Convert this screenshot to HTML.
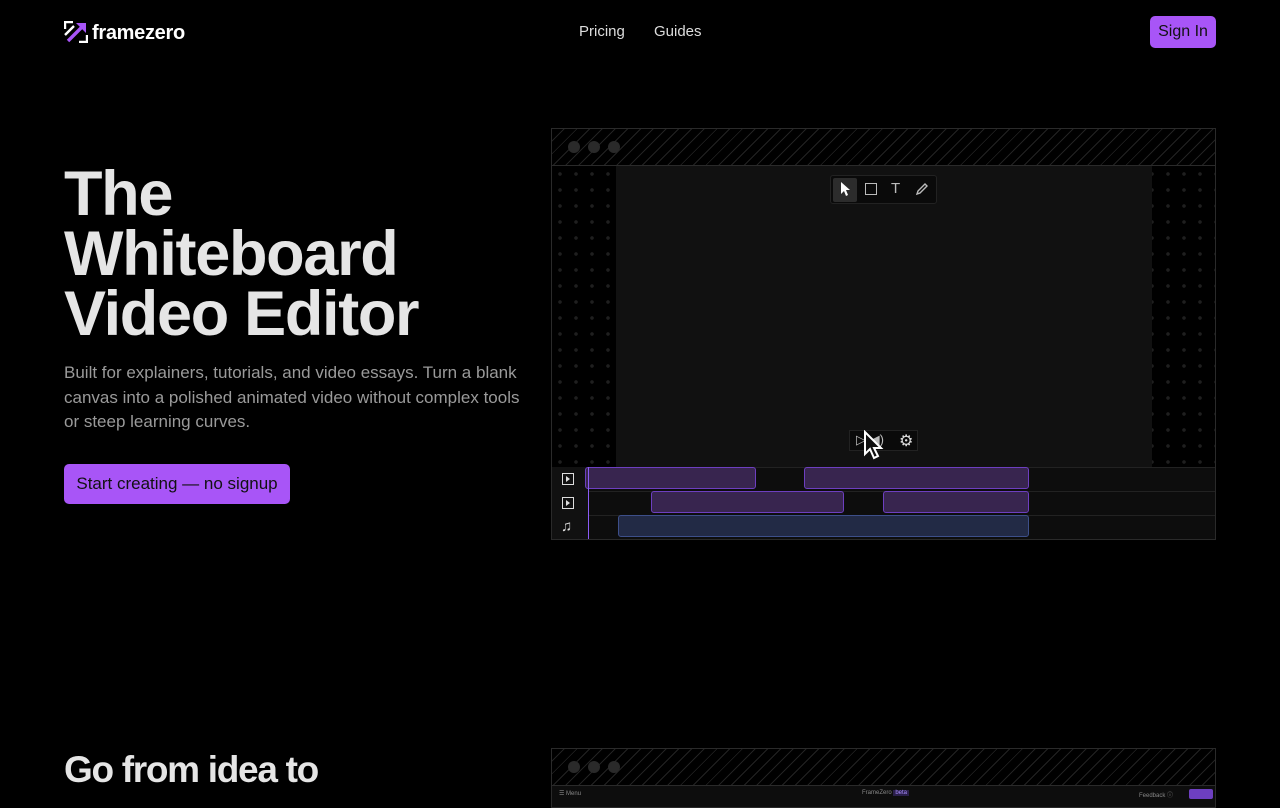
<!DOCTYPE html>
<html><head><meta charset="utf-8"><style>
*{margin:0;padding:0;box-sizing:border-box}
body{width:1280px;height:800px;overflow:hidden;background:#000;font-family:"Liberation Sans",sans-serif;color:#e5e5e5;position:relative}
.abs{position:absolute}
.hatch{background:repeating-linear-gradient(135deg,#000 0 8px,#222 8px 9px)}
.dots{background-color:#000;background-image:radial-gradient(circle,#1f1f1f 1.6px,transparent 2px)}
.clip{position:absolute;height:22px;border:1px solid #6d3fc0;background:#38254f;border-radius:3px}
</style></head><body>
<svg class="abs" style="left:64px;top:21px" width="24" height="22" viewBox="0 0 24 22"><path d="M1 8V1h8M1 14l9-9M15 21h8v-7" stroke="#fff" stroke-width="2.4" fill="none"/><path d="M4 20L18 6" stroke="#a855f7" stroke-width="3.4"/><path d="M12 2h10v10z" fill="#a855f7"/></svg>
<div class="abs" style="left:92px;top:22px;font-size:20px;font-weight:bold;color:#fff;letter-spacing:-0.3px">framezero</div>
<div class="abs" style="left:579px;top:23px;font-size:15px;color:#ddd">Pricing</div>
<div class="abs" style="left:654px;top:23px;font-size:15px;color:#ddd">Guides</div>
<div class="abs" style="left:1150px;top:16px;width:66px;height:32px;background:#a855f7;border-radius:5px;color:#111;font-size:16px;line-height:32px;text-align:center">Sign In</div>
<div class="abs" style="left:64px;top:164px;font-size:63px;font-weight:bold;line-height:60px;color:#e5e5e5;letter-spacing:-1.3px">The<br>Whiteboard<br>Video Editor</div>
<div class="abs" style="left:64px;top:361px;width:470px;font-size:17px;line-height:24.5px;color:#9a9a9a">Built for explainers, tutorials, and video essays. Turn a blank canvas into a polished animated video without complex tools or steep learning curves.</div>
<div class="abs" style="left:64px;top:464px;width:226px;height:40px;background:#a855f7;border-radius:5px;color:#111;font-size:17px;line-height:40px;text-align:center">Start creating — no signup</div>
<div class="abs" style="left:551px;top:128px;width:665px;height:412px;border:1px solid #2a2a2a;background:#0d0d0d;overflow:hidden">
 <div class="abs hatch" style="left:0;top:0;width:663px;height:37px;border-bottom:1px solid #2a2a2a"></div>
 <div class="abs" style="left:16px;top:12px;width:12px;height:12px;border-radius:50%;background:#2a2a2a"></div>
 <div class="abs" style="left:36px;top:12px;width:12px;height:12px;border-radius:50%;background:#2a2a2a"></div>
 <div class="abs" style="left:56px;top:12px;width:12px;height:12px;border-radius:50%;background:#2a2a2a"></div>
 <div class="abs dots" style="left:0;top:37px;width:64px;height:301px;background-position:0 0;background-size:16px 16px"></div>
 <div class="abs dots" style="left:600px;top:37px;width:63px;height:301px;background-position:-8px 0;background-size:16px 16px"></div>
 <div class="abs" style="left:64px;top:37px;width:536px;height:301px;background:#111"></div>
 <div class="abs" style="left:278px;top:46px;width:107px;height:29px;background:#0a0a0a;border:1px solid #222;border-radius:3px"></div>
 <div class="abs" style="left:281px;top:49px;width:24px;height:24px;background:#2c2c2c;border-radius:2px"></div>
 <svg class="abs" style="left:287px;top:52px" width="12" height="16" viewBox="0 0 12 16"><path d="M2 1v12l3-3 2 5 2-1-2-5h4z" fill="#fff"/></svg>
 <div class="abs" style="left:313px;top:54px;width:12px;height:12px;border:1.5px solid #bbb"></div>
 <div class="abs" style="left:339px;top:51px;font-size:15px;color:#bbb">T</div>
 <svg class="abs" style="left:363px;top:53px" width="14" height="14" viewBox="0 0 14 14"><path d="M2 12l1-3 7-7 2 2-7 7z" stroke="#bbb" stroke-width="1.4" fill="none"/></svg>
 <div class="abs" style="left:297px;top:301px;width:69px;height:21px;background:#0a0a0a;border:1px solid #222"></div>
 <div class="abs" style="left:304px;top:303px;font-size:13px;color:#bbb">▷ ◀)</div>
 <div class="abs" style="left:347px;top:302px;font-size:16px;color:#ddd">⚙</div>
 <svg class="abs" style="left:311px;top:301px" width="22" height="32" viewBox="0 0 22 32"><path d="M2 2v22l5-5 4 9 4-2-4-8h7z" fill="#111" stroke="#fff" stroke-width="2"/></svg>
 <div class="abs" style="left:0;top:338px;width:663px;height:1px;background:#222"></div>
 <div class="abs" style="left:0;top:362px;width:663px;height:1px;background:#222"></div>
 <div class="abs" style="left:0;top:386px;width:663px;height:1px;background:#222"></div>
 <div class="abs" style="left:0;top:338px;width:36px;height:72px;background:#111"></div>
 <div class="abs" style="left:10px;top:344px;width:12px;height:12px;border:1.5px solid #ddd"></div><div class="abs" style="left:14px;top:347px;width:0;height:0;border-left:4px solid #ddd;border-top:3px solid transparent;border-bottom:3px solid transparent"></div>
 <div class="abs" style="left:10px;top:368px;width:12px;height:12px;border:1.5px solid #ddd"></div><div class="abs" style="left:14px;top:371px;width:0;height:0;border-left:4px solid #ddd;border-top:3px solid transparent;border-bottom:3px solid transparent"></div>
 <div class="abs" style="left:9px;top:389px;font-size:15px;color:#ddd">♫</div>
 <div class="clip" style="left:33px;top:338px;width:171px"></div>
 <div class="clip" style="left:252px;top:338px;width:225px"></div>
 <div class="clip" style="left:99px;top:362px;width:193px"></div>
 <div class="clip" style="left:331px;top:362px;width:146px"></div>
 <div class="clip" style="left:66px;top:386px;width:411px;background:#222a45;border-color:#3d4f8a"></div>
 <div class="abs" style="left:36px;top:338px;width:1px;height:72px;background:#8b5cf6"></div>
</div>
<div class="abs" style="left:64px;top:749px;font-size:37px;font-weight:bold;color:#e5e5e5;letter-spacing:-1.3px">Go from idea to</div>
<div class="abs" style="left:551px;top:748px;width:665px;height:60px;border:1px solid #2a2a2a;background:#0d0d0d;overflow:hidden">
 <div class="abs hatch" style="left:0;top:0;width:663px;height:37px;border-bottom:1px solid #2a2a2a"></div>
 <div class="abs" style="left:16px;top:12px;width:12px;height:12px;border-radius:50%;background:#2a2a2a"></div>
 <div class="abs" style="left:36px;top:12px;width:12px;height:12px;border-radius:50%;background:#2a2a2a"></div>
 <div class="abs" style="left:56px;top:12px;width:12px;height:12px;border-radius:50%;background:#2a2a2a"></div>
 <div class="abs" style="left:7px;top:41px;font-size:6px;color:#888">☰ Menu</div>
 <div class="abs" style="left:310px;top:41px;font-size:6px;color:#888">FrameZero <span style="background:#2a1f4a;color:#a78bfa;padding:0 2px">beta</span></div>
 <div class="abs" style="left:587px;top:41px;font-size:6px;color:#888">Feedback ⓘ</div>
 <div class="abs" style="left:637px;top:40px;width:24px;height:10px;background:#6d3fc0;border-radius:2px"></div>
</div>
</body></html>
